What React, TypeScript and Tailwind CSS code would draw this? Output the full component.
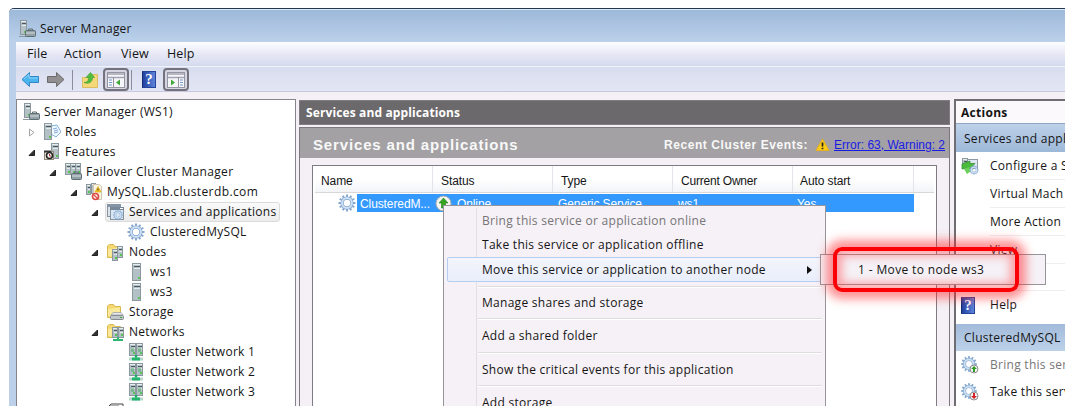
import React from "react";

type Kids = { children?: React.ReactNode };

const Svg = ({ children, s = 18 }: Kids & { s?: number }) => (
  <svg width={s} height={s} viewBox="0 0 18 18" className="block shrink-0">
    {children}
  </svg>
);

const Tower = ({ x = 0, y = 0, h = 16, w = 8 }: { x?: number; y?: number; h?: number; w?: number }) => (
  <g>
    <rect x={x + 0.5} y={y + 0.5} width={w - 1} height={h - 1} fill="#b3c0c5" stroke="#8b999f" />
    <rect x={x + 1} y={y + 1} width={w - 2} height="1" fill="#e8eef0" />
    <rect x={x + 2} y={y + 3} width={w - 3} height="1" fill="#4d585e" />
    <rect x={x + 2} y={y + 5} width={w - 3} height="1" fill="#e3eaec" />
    <rect x={x + w - 3} y={y + h - 4} width="2" height="2" fill="#57c454" />
  </g>
);

const Box = () => (
  <g>
    <path d="M10.5 10.5V9h4v1.5" fill="none" stroke="#5c6b72" />
    <rect x="7.5" y="10.5" width="10" height="6" rx="1" fill="#93a1a7" stroke="#5f6d74" />
    <path d="M8 13h9" stroke="#d5dde0" />
  </g>
);

const ServerBox = () => (
  <Svg>
    <Tower x={2} w={7} h={15} />
    <path d="M1 16.5h8" stroke="#8b999f" />
    <Box />
  </Svg>
);

const Roles = () => (
  <Svg>
    <path d="M8 3l6-1 4 7-5 5-5-3z" fill="#f2f8ff" stroke="#7fb0dd" />
    <path d="M10 6l4-1M11 8l4-1M11 10l4-1" stroke="#7fa8dc" />
    <Tower x={1} w={8} h={17} />
  </Svg>
);

const Features = () => (
  <Svg>
    <Tower x={8} w={8} h={16} />
    <rect x="1.5" y="8.5" width="9" height="8" fill="#e8e4dc" stroke="#8f8878" />
    <circle cx="6.5" cy="12.500" r="3" fill="#fff" stroke="#222" strokeWidth="1.6" />
    <path d="M6.500 11v2h1.500" stroke="#b33" fill="none" />
    <path d="M1 8.500h7" stroke="#333" strokeWidth="2" />
  </Svg>
);

const Cluster = () => (
  <Svg>
    <Tower x={1} w={6} h={12} />
    <Tower x={6} w={6} h={12} />
    <Tower x={11} w={6} h={12} />
    <Box />
  </Svg>
);

const ClusterWarn = () => (
  <Svg>
    <Tower x={1} y={1} w={5} h={11} />
    <Tower x={6} w={5} h={11} />
    <path d="M8.500 1.500h6l2 2v13h-8z" fill="#fbf5e4" stroke="#cfc6ae" />
    <path d="M13 3.500l3 5.500h-6z" fill="#f8c81c" stroke="#e0a818" strokeWidth=".7" />
    <path d="M13 5.500v2" stroke="#333" />
    <circle cx="10.5" cy="13.500" r="3" fill="#fff" stroke="#dd4a44" strokeWidth="1.7" />
    <path d="M9 12l3 3" stroke="#dd4a44" strokeWidth="1.3" />
  </Svg>
);

const teeth = [0, 30, 60, 90, 120, 150, 180, 210, 240, 270, 300, 330];
const GearShape = ({ cx = 9, cy = 9, k = 1 }: { cx?: number; cy?: number; k?: number }) => (
  <g transform={`translate(${cx} ${cy}) scale(${k})`}>
    {teeth.map((a) => (
      <rect key={a} x="-1" y="-8.5" width="2" height="3" fill="#86a9cf" transform={`rotate(${a})`} />
    ))}
    <circle r="4.9" fill="none" stroke="#84a8d0" strokeWidth="3.4" />
    <circle r="4.9" fill="none" stroke="#cfe0f2" strokeWidth="2" />
  </g>
);

const Gear = () => (
  <Svg>
    <GearShape />
  </Svg>
);

const GearBadge = ({ up }: { up: boolean }) => (
  <Svg>
    <GearShape cx={8} cy={8} k={0.92} />
    <circle cx="13" cy="13" r="4" fill="#f4f4f4" stroke="#8d8d8d" />
    <path
      d={up ? "M13 10l3 3h-2v3h-2v-3h-2z" : "M13 16l3-3h-2v-3h-2v3h-2z"}
      fill={up ? "#2f9b27" : "#d5202a"}
    />
  </Svg>
);

const ServicesIcon = () => (
  <Svg>
    <rect x="1.5" y="1.5" width="13" height="12" fill="#dde3e9" stroke="#8592a0" />
    <rect x="1" y="1" width="14" height="3" fill="#8695a5" />
    <rect x="4.5" y="4.5" width="13" height="12" fill="#dbe7f4" stroke="#8592a0" />
    <rect x="4" y="4" width="14" height="3" fill="#76879a" />
    <path d="M14 5.500h3" stroke="#fff" />
    <GearShape cx={12} cy={12} k={0.6} />
  </Svg>
);

const FolderShape = () => (
  <g>
    <path d="M1.500 14.500V3l2-1.500h4l1.500 2h5.500v11z" fill="#f5d970" stroke="#d8b850" />
    <path d="M2 13V6l12-1.500V14z" fill="#fbe99c" />
  </g>
);

const NodesFolder = () => (
  <Svg>
    <FolderShape />
    <Tower x={11} y={3} w={6} h={12} />
    <Tower x={6} y={6} w={6} h={12} />
  </Svg>
);

const StorageFolder = () => (
  <Svg>
    <FolderShape />
    <path d="M5 12l2-2.500h8l2 2.500z" fill="#e7eaec" stroke="#929a9f" strokeWidth=".7" />
    <rect x="4.5" y="12.500" width="13" height="4" rx="1" fill="#c0c6ca" stroke="#858d92" />
    <rect x="14" y="14" width="2" height="1" fill="#3cae3c" />
  </Svg>
);

const NetFolder = () => (
  <Svg>
    <FolderShape />
    <Tower x={6} y={4} w={6} h={11} />
    <Tower x={12} y={4} w={6} h={11} />
    <path d="M12 14v2M7 17h10" stroke="#2fb772" strokeWidth="2" />
  </Svg>
);

const ServerIcon = () => (
  <Svg>
    <Tower x={5} y={0} w={9} h={18} />
  </Svg>
);

const NetIcon = () => (
  <Svg>
    <Tower x={2} y={0} w={7} h={13} />
    <Tower x={9} y={0} w={7} h={13} />
    <path d="M4 6h3M4 8h3M11 6h3M11 8h3" stroke="#43ad61" />
    <path d="M9 12v4" stroke="#1fae6c" strokeWidth="2.500" />
    <path d="M2 16h14" stroke="#b9d6cd" strokeWidth="3" />
    <path d="M5 16h8" stroke="#22b56e" strokeWidth="3" />
  </Svg>
);

const HelpIcon = () => (
  <span className="flex h-[17px] w-[14px] shrink-0 items-center justify-center border border-[#24449c] border-l-[#142c76] bg-linear-to-r from-[#23419f] to-[#5d84db] font-['Liberation_Serif',serif] text-[15px] font-bold leading-none tracking-normal text-white">
    ?
  </span>
);

const Configure = () => (
  <Svg>
    <rect x="5.5" y="2.500" width="11" height="9" fill="#dfe8f2" stroke="#8b99a7" />
    <Tower x={1} y={1} w={6} h={10} />
    <path d="M1 7l8-3v2.500h5l-7 7-1-2.500-5 1z" fill="#4bbb3e" stroke="#27852b" strokeWidth=".7" />
    <path d="M3 12l5-2 1 3 4-1-7 5z" fill="#6dd159" />
    <GearShape cx={13} cy={13} k={0.55} />
  </Svg>
);

const Warn = () => (
  <svg width="15" height="14" viewBox="0 0 15 14" className="block shrink-0">
    <path d="M7.500 1L14 12.500H1z" fill="#fccb15" stroke="#e8b020" />
    <path d="M7.500 4.500v4M7.500 9.800v1.500" stroke="#222" strokeWidth="1.700" />
  </svg>
);

const BlueArrow = () => (
  <svg width="19" height="17" viewBox="0 0 19 17" className="block shrink-0">
    <path d="M1 8.500L8.500 1.500v4h9v6h-9v4z" fill="#49b4ee" stroke="#2f86c8" />
    <path d="M3 8l5-4.500v3.500h9" stroke="#8fd4f8" fill="none" />
  </svg>
);

const GreyArrow = () => (
  <svg width="19" height="17" viewBox="0 0 19 17" className="block shrink-0">
    <path d="M18 8.500L10.500 1.500v4h-9v6h9v4z" fill="#918f90" stroke="#6c6a6c" />
  </svg>
);

const UpFolder = () => (
  <svg width="18" height="18" viewBox="0 0 18 18" className="block shrink-0">
    <path d="M1.500 16.500V6.500h8l1.500-3h5.500v13z" fill="#f5d878" stroke="#dcbc62" />
    <path d="M3 11.500c4 0 4.500-2.500 4.500-5H5L9.500 1.500l4 5h-2c0 4-3 7-8.500 5z" fill="#51bd3f" stroke="#41a138" strokeWidth=".7" />
  </svg>
);

const PaneButton = ({ flip }: { flip?: boolean }) => (
  <span className="flex h-[23px] w-[26px] items-center justify-center rounded-[4px] border-2 border-[#74727d] bg-[#d5d4e2]">
    <svg width="18" height="16" viewBox="0 0 18 16" className="block">
      <rect x=".5" y=".5" width="17" height="15" fill="#f6f6fa" stroke="#9695a3" />
      <path d="M1 2h16M1 5.500h16" stroke="#a2a2b0" strokeWidth="1.500" />
      {flip ? (
        <>
          <path d="M11.500 5v10" stroke="#9695a3" />
          <path d="M13 8h3M13 10.500h3M13 13h3" stroke="#7599c8" />
          <path d="M4 7.500v6l4-3z" fill="#3fa837" />
        </>
      ) : (
        <>
          <path d="M6.500 5v10" stroke="#9695a3" />
          <path d="M2 8h3M2 10.500h3M2 13h3" stroke="#7599c8" />
          <path d="M13 7.500v6l-4-3z" fill="#3fa837" />
        </>
      )}
    </svg>
  </span>
);

const Twisty = ({ open }: { open?: boolean }) => (
  <svg width="8" height="9" viewBox="0 0 8 9" className="block shrink-0">
    {open ? (
      <path d="M6.500 2v5.500H1z" fill="#333" stroke="#222" />
    ) : (
      <path d="M1.500 1v7l4.500-3.500z" fill="#fff" stroke="#a5a5a5" />
    )}
  </svg>
);

const Node = ({ pad, icon, label, open, closed, sel, track, gap = "ml-[5px]" }: { pad: string; icon: React.ReactNode; label: string; open?: boolean; closed?: boolean; sel?: boolean; track?: string; gap?: string }) => (
  <div className={`flex h-5 shrink-0 items-center ${pad}`}>
    <span className="w-[15px] shrink-0">{(open || closed) && <Twisty open={open} />}</span>
    <span className={`-ml-px flex h-5 items-center border pr-[3px] ${sel ? "rounded-[3px] border-[#dcdadc] bg-linear-to-b from-[#fafafa] to-[#ececec]" : "border-transparent"}`}>
      {icon}
      <span className={`whitespace-nowrap ${gap} ${track ?? "tracking-[0.28px]"}`}>{label}</span>
    </span>
  </div>
);

const Action = ({ icon, label, dim, h = "h-[28px]", line = true }: { icon?: React.ReactNode; label: string; dim?: boolean; h?: string; line?: boolean }) => (
  <div className={`flex shrink-0 items-center pl-[5px] ${h}`}>
    <span className="flex w-[29px] shrink-0 justify-start">{icon}</span>
    <span className={`flex h-full grow items-center whitespace-nowrap ${line ? "border-b border-[#efedf0]" : ""} ${dim ? "text-[#777]" : ""}`}>{label}</span>
  </div>
);

const MenuItem = ({ label, dim, h }: { label: string; dim?: boolean; h: string }) => (
  <div className={`flex shrink-0 items-center whitespace-nowrap pl-[38px] ${h} ${dim ? "text-[#777577]" : ""}`}>{label}</div>
);

const Rule = () => <div className="ml-[34px] mr-[3px] h-[2px] shrink-0 border-b border-b-white bg-[#dfdce0]" />;

export default function App() {
  return (
    <div className="h-[420px] w-[1074px] overflow-hidden bg-white pl-[9px] pt-2 font-['Open_Sans',sans-serif] text-[12px] leading-none tracking-[0.28px] text-[#151515]">
      <div className="relative flex h-[398px] w-[1056px] flex-col overflow-hidden rounded-tl-[5px] border-t border-[#26384e] bg-[#bdd0ea]">
        <div className="flex h-[33px] shrink-0 items-center border-t border-[#dcebf9] bg-linear-to-b from-[#9db9d9] to-[#bbd1eb] pl-[9px] pt-[6px]">
          <ServerBox />
          <span className="ml-[4px] tracking-[0.22px]">Server Manager</span>
        </div>
        <div className="ml-[7px] flex min-h-0 grow flex-col bg-[#f4f0f5]">
          <div className="flex h-[24px] shrink-0 items-center bg-linear-to-b from-[#fdfdff] via-[#e6e8f6] to-[#d4daee] pl-[11px] text-[12.500px] tracking-[0.15px]">
            <span className="w-[37px]">File</span>
            <span className="w-[57px]">Action</span>
            <span className="w-[46px]">View</span>
            <span>Help</span>
          </div>
          <div className="flex h-[26px] shrink-0 items-center border-b border-t border-b-[#c3c8dc] border-t-[#f2f3fa] bg-linear-to-b from-[#d8ddef] to-[#e3e6f4] pl-[5px] pt-px">
            <BlueArrow />
            <span className="ml-[6px]"><GreyArrow /></span>
            <span className="ml-[7px] h-5 w-px bg-[#8d8c9c]" />
            <span className="ml-[8px]"><UpFolder /></span>
            <span className="ml-[4px]"><PaneButton /></span>
            <span className="ml-[2px] h-5 w-px bg-[#8d8c9c]" />
            <span className="ml-[10px]"><HelpIcon /></span>
            <span className="ml-[7px]"><PaneButton flip /></span>
          </div>
          <div className="flex min-h-0 grow pt-[7px]">
            <div className="flex w-[280px] shrink-0 flex-col overflow-hidden border border-b-0 border-[#85838c] bg-white pt-[2px]">
              <Node pad="-ml-[10px]" gap="ml-[4px]" icon={<ServerBox />} label="Server Manager (WS1)" />
              <Node pad="pl-[11px]" gap="ml-[4px]" icon={<Roles />} label="Roles" closed />
              <Node pad="pl-[11px]" gap="ml-[4px]" icon={<Features />} label="Features" open />
              <Node pad="pl-[32px]" gap="ml-[4px]" icon={<Cluster />} label="Failover Cluster Manager" open track="tracking-[0.34px]" />
              <Node pad="pl-[53px]" gap="ml-[4px]" icon={<ClusterWarn />} label="MySQL.lab.clusterdb.com" open track="tracking-[0.4px]" />
              <Node pad="pl-[74px]" icon={<ServicesIcon />} label="Services and applications" open sel />
              <Node pad="pl-[95px]" icon={<Gear />} label="ClusteredMySQL" />
              <Node pad="pl-[74px]" icon={<NodesFolder />} label="Nodes" open />
              <Node pad="pl-[95px]" icon={<ServerIcon />} label="ws1" />
              <Node pad="pl-[95px]" icon={<ServerIcon />} label="ws3" />
              <Node pad="pl-[74px]" icon={<StorageFolder />} label="Storage" />
              <Node pad="pl-[74px]" icon={<NetFolder />} label="Networks" open />
              <Node pad="pl-[95px]" icon={<NetIcon />} label="Cluster Network 1" />
              <Node pad="pl-[95px]" icon={<NetIcon />} label="Cluster Network 2" />
              <Node pad="pl-[95px]" icon={<NetIcon />} label="Cluster Network 3" />
              <div className="flex h-5 shrink-0 pl-[90px] pt-px">
                <svg width="17" height="10" viewBox="0 0 17 10"><path d="M1 4l3-3h12v8" fill="none" stroke="#444" /><path d="M3 3h9" stroke="#666" /></svg>
              </div>
            </div>

            <div className="ml-[3px] flex w-[651px] shrink-0 flex-col pt-px">
              <div className="h-[25px] shrink-0 border border-[#7f7d7f] bg-[#6b696b] pl-[6px] pt-[6px] font-bold tracking-[0.12px] text-white">
                Services and applications
              </div>
              <div className="mt-[2px] flex min-h-0 grow flex-col border border-b-0 border-[#7b797b]">
                <div className="flex h-[30px] shrink-0 items-center bg-[#a3a1a3] pl-[13px] pr-[4px] pt-[3px] font-['Liberation_Sans',sans-serif] font-bold text-[#f8f8f8]">
                  <span className="text-[15px] tracking-[0.850px]">Services and applications</span>
                  <span className="ml-auto text-[12px] tracking-[0.580px]">Recent Cluster Events:</span>
                  <span className="ml-[7px]"><Warn /></span>
                  <span className="ml-[4px] text-[12px] font-normal tracking-normal text-[#1a1ae6] underline">Error: 63, Warning: 2</span>
                </div>
                <div className="ml-[12px] mt-[7px] flex min-h-0 w-[625px] grow flex-col border border-b-0 border-[#7d7b83] bg-white font-['Liberation_Sans',sans-serif] tracking-[-0.1px]">
                  <div className="ml-[2px] mr-[2px] flex h-[27px] shrink-0 items-center border-b border-[#d8d8dc] bg-linear-to-b from-white from-50% to-[#f3f4f7]">
                    <span className="flex h-full w-[118px] items-center border-r border-[#e3e5ea] pl-[6px] pt-[3px]">Name</span>
                    <span className="flex h-full w-[120px] items-center border-r border-[#e3e5ea] pl-[8px] pt-[3px]">Status</span>
                    <span className="flex h-full w-[120px] items-center border-r border-[#e3e5ea] pl-[8px] pt-[3px]">Type</span>
                    <span className="flex h-full w-[120px] items-center border-r border-[#e3e5ea] pl-[8px] pt-[3px] tracking-[-0.2px]">Current Owner</span>
                    <span className="flex h-full w-[121px] items-center border-r border-[#e3e5ea] pl-[7px] pt-[3px]">Auto start</span>
                  </div>
                  <div className="mt-px flex h-[18px] shrink-0 items-center pl-[25px]">
                    <Gear />
                    <div className="ml-px flex h-[18px] w-[557px] items-center bg-[#3399ff] text-white">
                      <span className="w-[78px] pl-[3px] pt-[2px]">ClusteredM...</span>
                      <svg width="17" height="17" viewBox="0 0 17 17" className="block">
                        <circle cx="8.500" cy="8.500" r="7.500" fill="#f5f5f3" stroke="#a8aaa6" />
                        <path d="M8.500 3l4.500 5h-2.500v5h-4V8H4z" fill="#33a520" stroke="#217a16" strokeWidth=".6" />
                      </svg>
                      <span className="w-[106px] pl-[5px] pt-[2px]">Online</span>
                      <span className="w-[120px] pt-[2px]">Generic Service</span>
                      <span className="w-[119px] pt-[2px]">ws1</span>
                      <span className="pt-[2px]">Yes</span>
                    </div>
                  </div>
                </div>
              </div>
            </div>

            <div className="ml-[4px] flex min-w-0 grow flex-col overflow-hidden border-l-2 border-t-2 border-[#6f6d74] bg-white">
              <div className="h-[22px] shrink-0 bg-[#fbf9fb] pl-[5px] pt-[6px] font-bold">Actions</div>
              <div className="flex h-[29px] shrink-0 items-center whitespace-nowrap border-t border-[#8da6c4] bg-linear-to-b from-[#bdd1e9] to-[#9db8d8] pl-[8px] pt-[2px]">Services and appl</div>
              <Action icon={<Configure />} label="Configure a S" />
              <Action label="Virtual Mach" />
              <Action label="More Action" />
              <Action label="View" />
              <Action icon={<svg width="16" height="16" viewBox="0 0 16 16"><rect x="1" y="2" width="14" height="12" fill="#f7f7f7" stroke="#555" /></svg>} label="" h="h-[27px]" />
              <Action icon={<HelpIcon />} label="Help" h="h-[28px]" line={false} />
              <div className="mt-[5px] flex h-[27px] shrink-0 items-center bg-linear-to-b from-[#a2bbda] to-[#bdd1e9] pl-[8px] pt-px">ClusteredMySQL</div>
              <Action icon={<GearBadge up />} label="Bring this ser" dim line={false} />
              <Action icon={<GearBadge up={false} />} label="Take this serv" h="h-[26px]" line={false} />
            </div>
          </div>
        </div>

        <div className="absolute left-[434px] top-[196px] flex h-[220px] w-[383px] flex-col border border-[#97959a] bg-[#f5f1f6] pt-[2px] before:absolute before:bottom-0 before:left-[32px] before:top-[2px] before:w-px before:bg-[#e2dfe4]">
          <MenuItem label="Bring this service or application online" dim h="h-[25px]" />
          <MenuItem label="Take this service or application offline" h="h-[24px]" />
          <div className="relative ml-[3px] mr-[2px] flex h-[25px] shrink-0 items-center justify-between whitespace-nowrap rounded-[2px] border border-[#b4cdf3] bg-linear-to-b from-[#f4f5fc] to-[#e8eefb] pl-[34px] pr-[10px]">
            <span>Move this service or application to another node</span>
            <svg width="5" height="8" viewBox="0 0 5 8"><path d="M0 0v8l5-4z" fill="#111" /></svg>
          </div>
          <div className="h-[4px] shrink-0" />
          <Rule />
          <MenuItem label="Manage shares and storage" h="h-[30px]" />
          <Rule />
          <MenuItem label="Add a shared folder" h="h-[32px]" />
          <Rule />
          <MenuItem label="Show the critical events for this application" h="h-[31px]" />
          <Rule />
          <MenuItem label="Add storage" h="h-[32px]" />
        </div>

        <div className="absolute left-[811px] top-[245px] flex h-[31px] w-[226px] items-center border border-[#97959a] bg-[#f5f1f6] pl-[37px] tracking-[0.36px]">
          1 - Move to node ws3
        </div>
        <div className="absolute left-[824px] top-[238px] h-[45px] w-[186px] rounded-[9px] border-[4px] border-[#fb0007] shadow-[0_0_10px_7px_rgba(255,40,45,0.500),inset_0_0_10px_5px_rgba(255,60,65,0.450)]" />
      </div>
    </div>
  );
}
